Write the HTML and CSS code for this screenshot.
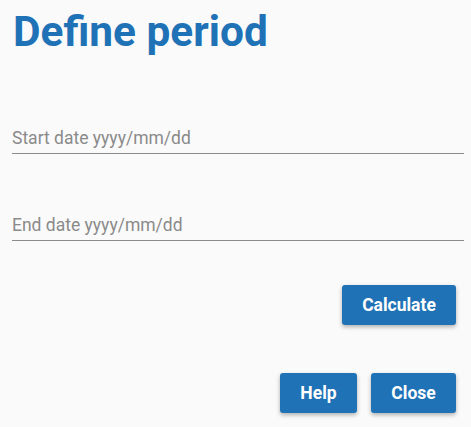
FILE: index.html
```html
<!DOCTYPE html>
<html>
<head>
<meta charset="utf-8">
<link rel="stylesheet" href="styles.css">
</head>
<body>
<div class="dialog">
  <h1 class="title">Define period</h1>
  <div class="field first">
    <input class="input" type="text" placeholder="Start date yyyy/mm/dd">
  </div>
  <div class="field second">
    <input class="input" type="text" placeholder="End date yyyy/mm/dd">
  </div>
  <div class="row calc-row">
    <button class="btn calc">Calculate</button>
  </div>
  <div class="row actions">
    <button class="btn help">Help</button>
    <button class="btn close">Close</button>
  </div>
</div>
</body>
</html>
```
FILE: styles.css
```css
html, body {
  margin: 0;
  padding: 0;
  background: #fafafa;
}
body {
  font-family: Roboto, "Liberation Sans", sans-serif;
  width: 471px;
  height: 427px;
  overflow: hidden;
}
.dialog {
  padding: 0 7px 0 12px;
}
.title {
  margin: 0;
  padding-top: 7px;
  padding-left: 1px;
  font-size: 42.4px;
  line-height: 50px;
  font-weight: 700;
  color: #1f72b5;
}
.field {
  display: flex;
}
.field.first {
  margin-top: 70px;
}
.field.second {
  margin-top: 60px;
}
.input {
  flex: 1;
  border: none;
  border-bottom: 1px solid #8c8c8c;
  background: transparent;
  font-family: Roboto, "Liberation Sans", sans-serif;
  font-size: 17.5px;
  font-weight: 400;
  padding: 0 0 5px 0;
  height: 27px;
  box-sizing: border-box;
  outline: none;
}
.input::placeholder {
  color: #8a8a8a;
  opacity: 1;
}
.row {
  display: flex;
  justify-content: flex-end;
  padding-right: 8px;
}
.calc-row {
  margin-top: 44px;
}
.actions {
  margin-top: 48px;
  gap: 14px;
}
.btn {
  height: 40px;
  border: none;
  border-radius: 3px;
  background: #1f72b5;
  color: #fff;
  font-family: Roboto, "Liberation Sans", sans-serif;
  font-size: 17.5px;
  font-weight: 700;
  box-shadow: 0 2px 4px rgba(0,0,0,0.3);
  padding: 0;
}
.calc { width: 114px; }
.help { width: 77px; }
.close { width: 85px; }
```
